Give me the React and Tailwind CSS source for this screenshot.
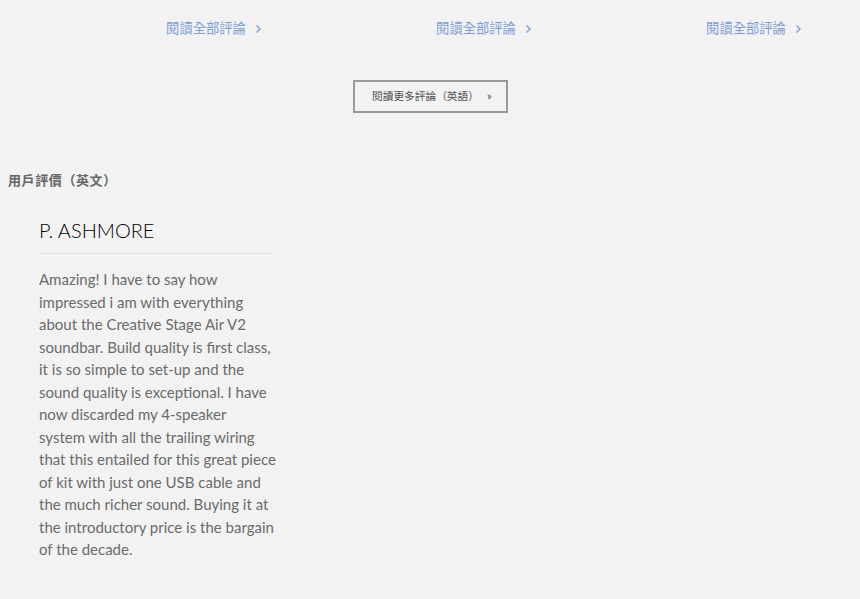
import React from 'react'

const ReviewLink = () => (
    <div className="w-[270px] shrink-0 flex justify-center">
        <a className="text-[13.3px] text-[#7d9fd6] flex items-center gap-[9px]" href="#">
            閱讀全部評論
            <svg width="7" height="10" viewBox="0 0 7 10" fill="none" stroke="#7d9fd6" strokeWidth="1.4">
                <path d="M1.5 1.5 L5 5 L1.5 8.5" />
            </svg>
        </a>
    </div>
)

const lines = [
    'Amazing! I have to say how',
    'impressed i am with everything',
    'about the Creative Stage Air V2',
    'soundbar. Build quality is first class,',
    'it is so simple to set-up and the',
    'sound quality is exceptional. I have',
    'now discarded my 4-speaker',
    'system with all the trailing wiring',
    'that this entailed for this great piece',
    'of kit with just one USB cable and',
    'the much richer sound. Buying it at',
    'the introductory price is the bargain',
    'of the decade.',
]

const App = () => {
    return (
        <div className="min-h-[599px] bg-[#f2f2f2] text-[#666] overflow-hidden" style={{ fontFamily: 'Lato, "Noto Sans CJK TC", sans-serif' }}>
            <div className="flex pl-[79px] pt-[19px]">
                <ReviewLink />
                <ReviewLink />
                <ReviewLink />
            </div>
            <div className="flex justify-center pt-[41px] pl-[1px]">
                <button className="w-[155px] h-[33px] border-2 border-[#999] text-[10.7px] text-[#555] flex items-center pl-[17px] gap-[8px]">
                    <span>閱讀更多評論（英語）</span>
                    <span>»</span>
                </button>
            </div>
            <h3 className="mt-[58px] ml-[8px] text-[13px] tracking-[0.6px] font-bold text-[#666]">用戶評價（英文）</h3>
            <div className="ml-[39px] mt-[28px] w-[232px]">
                <div className="text-[20px] text-black font-light leading-[24px] pb-[11px] border-b border-[#ddd]">P. ASHMORE</div>
                <p className="mt-[14px] text-[15px] leading-[22.5px] text-[#6b6b6b] whitespace-nowrap">
                    {lines.map((l, i) => (
                        <span key={i} className="block">{l}</span>
                    ))}
                </p>
            </div>
        </div>
    )
}

export default App
